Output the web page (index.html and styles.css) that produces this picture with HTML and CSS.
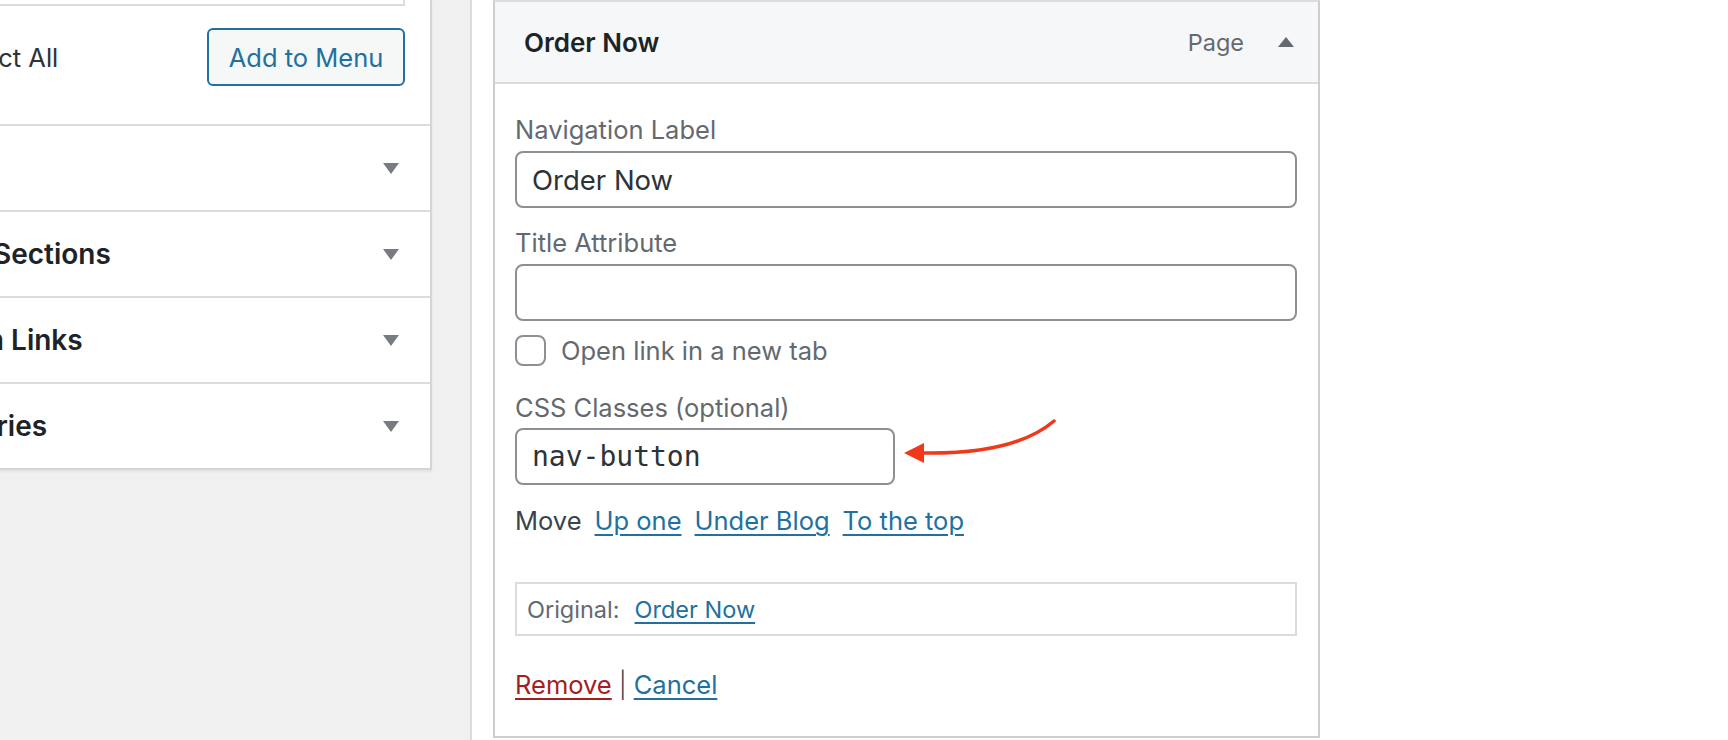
FILE: index.html
```html
<!DOCTYPE html>
<html lang="en">
<head>
<meta charset="utf-8">
<title>Menus</title>
<link rel="stylesheet" href="styles.css">
</head>
<body>
<div class="screen">
  <aside class="side">
    <div class="side-panel">
      <section class="acc-open">
        <div class="checklist"></div>
        <div class="list-controls">
          <label class="select-all"><input type="checkbox" class="sel-box">Select All</label>
          <button class="btn-add" type="button">Add to Menu</button>
        </div>
      </section>
      <div class="acc-row">
        <h3 class="acc-title">Posts</h3>
        <svg class="acc-arrow" viewBox="0 0 16 11" aria-hidden="true"><polygon points="0,0 16,0 8,11"/></svg>
      </div>
      <div class="acc-row">
        <h3 class="acc-title">Footer Sections</h3>
        <svg class="acc-arrow" viewBox="0 0 16 11" aria-hidden="true"><polygon points="0,0 16,0 8,11"/></svg>
      </div>
      <div class="acc-row">
        <h3 class="acc-title">Custom Links</h3>
        <svg class="acc-arrow" viewBox="0 0 16 11" aria-hidden="true"><polygon points="0,0 16,0 8,11"/></svg>
      </div>
      <div class="acc-row">
        <h3 class="acc-title">Categories</h3>
        <svg class="acc-arrow" viewBox="0 0 16 11" aria-hidden="true"><polygon points="0,0 16,0 8,11"/></svg>
      </div>
    </div>
  </aside>

  <main class="menu-area">
    <div class="menu-item">
      <div class="item-handle">
        <span class="item-title">Order Now</span>
        <span class="item-controls">
          <span class="item-type">Page</span>
          <svg class="item-arrow" viewBox="0 0 16 10" aria-hidden="true"><polygon points="0,10 16,10 8,0"/></svg>
        </span>
      </div>
      <div class="item-settings">
        <label class="field-label">Navigation Label</label>
        <input class="field-input" type="text" value="Order Now">

        <label class="field-label gap">Title Attribute</label>
        <input class="field-input" type="text" value="">

        <label class="check-row"><input type="checkbox" class="check-box">Open link in a new tab</label>

        <label class="field-label gap-lg">CSS Classes (optional)</label>
        <input class="field-input code" type="text" value="nav-button">

        <div class="move-row">
          <span class="move-label">Move</span>
          <a href="#" class="link">Up one</a>
          <a href="#" class="link">Under Blog</a>
          <a href="#" class="link">To the top</a>
        </div>

        <div class="original">
          <span class="orig-label">Original:</span>
          <a href="#" class="link">Order Now</a>
        </div>

        <div class="actions">
          <a href="#" class="link danger">Remove</a>
          <span class="sep">|</span>
          <a href="#" class="link">Cancel</a>
        </div>
      </div>
    </div>

    <svg class="annot" viewBox="0 0 170 60" aria-hidden="true">
      <path d="M159 6 Q119 40 26 38" fill="none" stroke="#f0381a" stroke-width="3.5" stroke-linecap="round"/>
      <polygon points="9,38 29,28 29,48" fill="#f0381a"/>
    </svg>
  </main>
</div>
</body>
</html>
```

FILE: styles.css
```css
* { box-sizing: border-box; }

html, body {
  margin: 0;
  padding: 0;
}

body {
  width: 1728px;
  height: 740px;
  overflow: hidden;
  background: #fff;
  color: #2c3338;
  font-family: Inter, "Noto Sans", "Liberation Sans", sans-serif;
}

.screen {
  display: flex;
  height: 740px;
}

/* ---------- left column ---------- */
.side {
  flex: none;
  width: 472px;
  background: #f0f0f1;
  border-right: 2px solid #dcdcde;
  overflow: hidden;
}

.side-panel {
  width: 540px;
  margin-left: -108px;
  background: #fff;
  border-right: 2px solid #d3d5d8;
  box-shadow: 0 2px 2px rgba(0, 0, 0, 0.05);
}

.acc-open {
  border-bottom: 2px solid #dcdcde;
  padding: 0 25px 38px 0;
}

.checklist {
  height: 6px;
  border: 2px solid #dcdcde;
  border-top: none;
}

.list-controls {
  margin-top: 22px;
  display: flex;
  align-items: center;
  justify-content: space-between;
}

.select-all {
  display: flex;
  align-items: center;
  font-size: 25.5px;
  color: #2c3338;
}

.sel-box {
  appearance: none;
  width: 32px;
  height: 32px;
  margin: 0 22px 0 0;
  border: 2px solid #8c8f94;
  border-radius: 8px;
}

.btn-add {
  width: 198px;
  height: 58px;
  border: 2px solid #21709f;
  border-radius: 6px;
  background: #f6f7f7;
  color: #21709f;
  font-family: inherit;
  font-size: 25.5px;
  padding: 0;
}

.acc-row {
  height: 86px;
  border-bottom: 2px solid #dcdcde;
  display: flex;
  align-items: center;
  justify-content: space-between;
  padding: 0 31px 0 7px;
}

.acc-row:last-child {
  border-bottom-color: #d3d5d8;
}

.acc-title {
  margin: 0;
  font-size: 28px;
  font-weight: 600;
  color: #1d2327;
  white-space: nowrap;
}

.acc-arrow {
  width: 16px;
  height: 11px;
  fill: #787c82;
}

/* ---------- right area ---------- */
.menu-area {
  flex: 1;
  position: relative;
  padding-left: 21px;
}

.menu-item {
  width: 827px;
  border: 2px solid #ccced2;
  border-top-color: #dcdcde;
}

.item-handle {
  height: 82px;
  background: #f6f7f8;
  border-bottom: 2px solid #dcdcde;
  display: flex;
  align-items: center;
  justify-content: space-between;
  padding: 0 24px 0 29px;
}

.item-title {
  font-size: 26px;
  font-weight: 600;
  color: #1d2327;
}

.item-controls {
  display: flex;
  align-items: center;
  gap: 34px;
}

.item-type {
  font-size: 23.5px;
  color: #646970;
}

.item-arrow {
  width: 16px;
  height: 10px;
  fill: #646970;
}

.item-settings {
  padding: 31px 21px 36px 20px;
  display: flex;
  flex-direction: column;
  align-items: flex-start;
}

.field-label {
  display: block;
  font-size: 25.5px;
  line-height: 30px;
  color: #646970;
  margin-bottom: 6px;
}

.field-label.gap { margin-top: 20px; }
.field-label.gap-lg { margin-top: 27px; margin-bottom: 5px; }

.field-input {
  width: 782px;
  height: 57px;
  border: 2px solid #8c8f94;
  border-radius: 8px;
  padding: 0 15px;
  font-family: inherit;
  font-size: 27.5px;
  color: #2c3338;
  background: #fff;
}

.field-input.code {
  width: 380px;
  font-family: "DejaVu Sans Mono", "Liberation Mono", monospace;
  font-size: 28px;
}

.check-row {
  margin-top: 14px;
  display: flex;
  align-items: center;
  font-size: 25.5px;
  color: #646970;
}

.check-box {
  appearance: none;
  width: 31px;
  height: 31px;
  margin: 0 15px 0 0;
  border: 2px solid #8c8f94;
  border-radius: 8px;
  background: #fff;
}

.move-row {
  margin-top: 21px;
  display: flex;
  align-items: baseline;
  gap: 13px;
  font-size: 25.5px;
  line-height: 30px;
}

.move-label { color: #3c434a; }

.link {
  color: #21709f;
  text-decoration: underline;
  text-decoration-thickness: 2px;
  text-underline-offset: 4px;
}

.link.danger { color: #a3201f; }

.original {
  margin-top: 46px;
  width: 782px;
  height: 54px;
  border: 2px solid #dcdcde;
  display: flex;
  align-items: center;
  gap: 15px;
  padding-left: 10px;
  font-size: 23.5px;
}

.orig-label { color: #646970; }

.actions {
  margin-top: 34px;
  display: flex;
  align-items: baseline;
  gap: 7px;
  font-size: 25.5px;
  line-height: 30px;
}

.sep {
  color: #3c434a;
  font-weight: 300;
}

/* annotation arrow drawn over the form */
.annot {
  position: absolute;
  left: 423px;
  top: 415px;
  width: 170px;
  height: 60px;
}
```
